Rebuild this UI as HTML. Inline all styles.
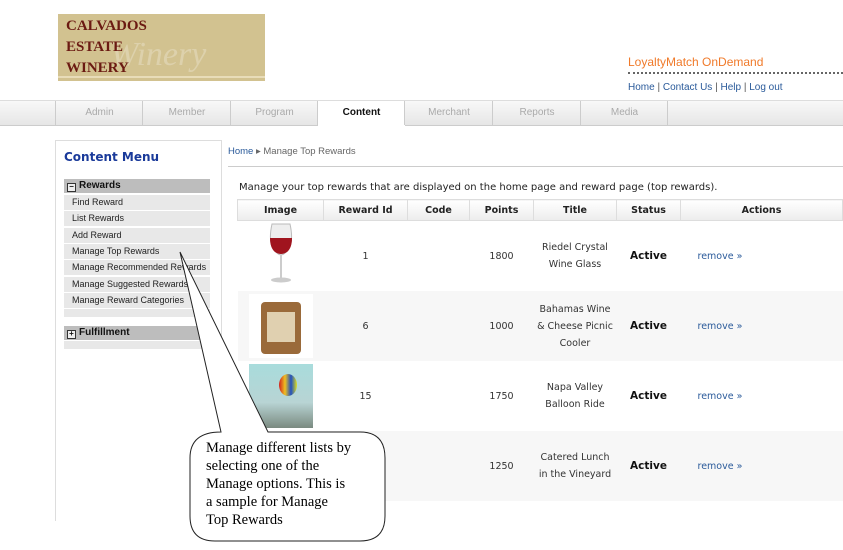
<!DOCTYPE html>
<html><head><style>
body{margin:0;width:843px;height:550px;background:#fff;position:relative;overflow:hidden;font-family:"DejaVu Sans","Liberation Sans",sans-serif;}
.a{position:absolute}
.logo{left:58px;top:14px;width:207px;height:67px;background:#d2c290;overflow:hidden}
.logo .t{position:absolute;left:8px;font:bold 15px "Liberation Serif",serif;color:#6b1a12;line-height:21px}
.tabs{left:0;top:100px;width:843px;height:24px;background:linear-gradient(#f8f8f8,#e6e6e6);border-top:1px solid #ddd;border-bottom:1px solid #ccc}
.tab{position:absolute;top:0;height:24px;line-height:23px;text-align:center;font-size:10px;color:#aaa;border-left:1px solid #ccc;font-family:"Liberation Sans",sans-serif}
.side{left:55px;top:140px;width:165px;height:380px;border:1px solid #ddd;border-bottom:none}
.mi{position:absolute;left:64px;width:146px;height:15px;background:#e8e8e8;font:9px "Liberation Sans",sans-serif;line-height:15px;text-indent:8px;color:#222;white-space:nowrap}
.hd{position:absolute;left:64px;width:146px;height:14px;background:#bdbdbd;font:bold 10px "Liberation Sans",sans-serif;line-height:14px;color:#111}
.hd b{display:inline-block;width:7px;height:7px;border:1px solid #333;background:#eee;margin:0 3px 0 3px;vertical-align:-1px;font-size:8px;line-height:6px;text-align:center}
table{position:absolute;left:237px;top:199px;width:606px;border-collapse:collapse;font-size:9.5px;color:#333;table-layout:fixed}
th{height:20px;background:linear-gradient(#fff,#ececec);border:1px solid #ddd;font-weight:bold;color:#222;font-size:9.5px;padding:0}
td{text-align:center;height:70px;line-height:17px;padding:0}
tr.g td{background:#f7f7f7}
.rm{color:#2a5a9a;text-align:left;padding-left:17px}
.st{font-weight:bold;color:#111;font-size:10.5px}
</style></head><body>
<div class="a logo"><div style="position:absolute;left:52px;top:22px;font:italic 34px 'Liberation Serif',serif;color:rgba(255,255,255,.25)">Winery</div>
<div class="t" style="top:2px">CALVADOS</div><div class="t" style="top:23px">ESTATE</div><div class="t" style="top:44px">WINERY</div>
<div style="position:absolute;left:0;bottom:3px;width:207px;height:2px;background:#e8dcb8"></div></div>
<div class="a" style="left:628px;top:55px;font:12px 'Liberation Sans',sans-serif;color:#f07a2a">LoyaltyMatch OnDemand</div>
<div class="a" style="left:628px;top:72px;width:215px;border-top:2px dotted #666"></div>
<div class="a" style="left:628px;top:82px;font:10px 'Liberation Sans',sans-serif;color:#2a5a9a">Home <span style="color:#555">|</span> Contact Us <span style="color:#555">|</span> Help <span style="color:#555">|</span> Log out</div>
<div class="a tabs">
<div class="tab" style="left:55px;width:87px">Admin</div>
<div class="tab" style="left:142px;width:88px">Member</div>
<div class="tab" style="left:230px;width:87px">Program</div>
<div class="tab" style="left:317px;width:87px;background:#fff;color:#111;font-weight:bold;height:25px">Content</div>
<div class="tab" style="left:404px;width:88px">Merchant</div>
<div class="tab" style="left:492px;width:88px">Reports</div>
<div class="tab" style="left:580px;width:87px">Media</div>
<div class="tab" style="left:667px;width:1px"></div>
</div>
<div class="a side"></div>
<div class="a" style="left:64px;top:150px;font:bold 12px 'DejaVu Sans',sans-serif;color:#1a3a9a">Content Menu</div>
<div class="hd" style="top:179px"><b>−</b>Rewards</div>
<div class="mi" style="top:195px">Find Reward</div>
<div class="mi" style="top:211px">List Rewards</div>
<div class="mi" style="top:228px">Add Reward</div>
<div class="mi" style="top:244px">Manage Top Rewards</div>
<div class="mi" style="top:260px">Manage Recommended Rewards</div>
<div class="mi" style="top:277px">Manage Suggested Rewards</div>
<div class="mi" style="top:293px">Manage Reward Categories</div>
<div class="mi" style="top:309px;height:8px;background:#e8e8e8"></div>
<div class="hd" style="top:326px"><b>+</b>Fulfillment</div>
<div class="mi" style="top:341px;height:8px"></div>
<div class="a" style="left:228px;top:146px;font:9.5px 'Liberation Sans',sans-serif;color:#666"><span style="color:#2a5a9a">Home</span> ▸ Manage Top Rewards</div>
<div class="a" style="left:228px;top:166px;width:615px;border-top:1px solid #ccc"></div>
<div class="a" style="left:239px;top:182px;font-size:10px;color:#222">Manage your top rewards that are displayed on the home page and reward page (top rewards).</div>
<table>
<colgroup><col style="width:86px"><col style="width:84px"><col style="width:62px"><col style="width:64px"><col style="width:83px"><col style="width:64px"><col></colgroup>
<tr><th>Image</th><th>Reward Id</th><th>Code</th><th>Points</th><th>Title</th><th>Status</th><th>Actions</th></tr>
<tr><td><svg width="30" height="62" viewBox="0 0 30 62"><path d="M6 2 Q2 20 8 28 Q12 33 15 33 Q18 33 22 28 Q28 20 24 2Z" fill="#eee" stroke="#bbb"/><path d="M4 16 Q4 26 9 30 Q15 34 21 30 Q26 26 26 16Z" fill="#a0141e"/><rect x="14" y="33" width="2" height="24" fill="#ccc"/><ellipse cx="15" cy="58" rx="10" ry="2.5" fill="#ccc"/></svg></td><td>1</td><td></td><td>1800</td><td>Riedel Crystal<br>Wine Glass</td><td class="st">Active</td><td class="rm">remove »</td></tr>
<tr class="g"><td><div style="width:64px;height:64px;margin:auto;background:#fff;position:relative"><div style="position:absolute;left:12px;top:8px;width:40px;height:52px;background:#9a6a3a;border-radius:4px"></div><div style="position:absolute;left:18px;top:18px;width:28px;height:30px;background:#e0d0b0"></div></div></td><td>6</td><td></td><td>1000</td><td>Bahamas Wine<br>&amp; Cheese Picnic<br>Cooler</td><td class="st">Active</td><td class="rm">remove »</td></tr>
<tr><td><div style="width:64px;height:64px;margin:auto;background:linear-gradient(#a8dcdc,#b8d4d4 60%,#7a8a80);position:relative"><div style="position:absolute;left:30px;top:10px;width:18px;height:22px;border-radius:50%;background:linear-gradient(90deg,#d02020,#f0c020,#2050c0,#e0e020)"></div></div></td><td>15</td><td></td><td>1750</td><td>Napa Valley<br>Balloon Ride</td><td class="st">Active</td><td class="rm">remove »</td></tr>
<tr class="g"><td></td><td></td><td></td><td>1250</td><td>Catered Lunch<br>in the Vineyard</td><td class="st">Active</td><td class="rm">remove »</td></tr>
</table>
<svg class="a" style="left:0;top:0" width="843" height="550">
<path d="M221 432 L180 252 L268 432 L360 432 Q385 432 385 458 L385 516 Q385 541 360 541 L215 541 Q190 541 190 516 L190 458 Q190 432 221 432Z" fill="#fff" stroke="#222" stroke-width="1"/>
</svg>
<div class="a" style="left:206px;top:439px;white-space:nowrap;font:14.5px/18px 'Liberation Serif',serif;color:#000">Manage different lists by<br>selecting one of the<br>Manage options. This is<br>a sample for Manage<br>Top Rewards</div>
</body></html>
